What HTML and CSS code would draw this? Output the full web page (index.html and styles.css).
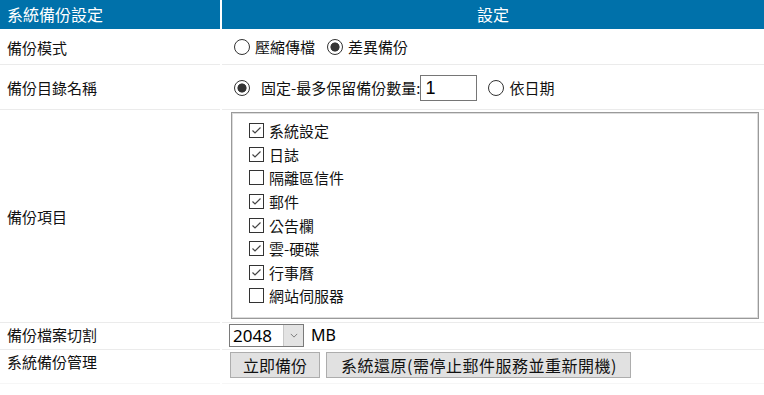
FILE: index.html
```html
<!DOCTYPE html>
<html lang="zh-Hant">
<head>
  <meta charset="UTF-8" />
  <title>系統備份設定</title>
  <link rel="stylesheet" href="styles.css">
</head>
<body>
  <div class="settings">
    <div class="head">系統備份設定</div>
    <div class="head center">設定</div>

    <div class="name row1">備份模式</div>
    <div class="value row1">
      <label class="opt"><span class="radio"></span>壓縮傳檔</label>
      <label class="opt"><span class="radio on"></span>差異備份</label>
    </div>

    <div class="name row2">備份目錄名稱</div>
    <div class="value row2">
      <label class="opt wide"><span class="radio on"></span>固定-最多保留備份數量:</label><span class="num">1</span>
      <label class="opt"><span class="radio"></span>依日期</label>
    </div>

    <div class="name row3">備份項目</div>
    <div class="value row3">
      <div class="listbox">
        <label class="item"><span class="check on"><svg viewBox="0 0 13 13"><path d="M2.5 6.5 L5 9 L10.5 3.5" /></svg></span>系統設定</label>
        <label class="item"><span class="check on"><svg viewBox="0 0 13 13"><path d="M2.5 6.5 L5 9 L10.5 3.5" /></svg></span>日誌</label>
        <label class="item"><span class="check"></span>隔離區信件</label>
        <label class="item"><span class="check on"><svg viewBox="0 0 13 13"><path d="M2.5 6.5 L5 9 L10.5 3.5" /></svg></span>郵件</label>
        <label class="item"><span class="check on"><svg viewBox="0 0 13 13"><path d="M2.5 6.5 L5 9 L10.5 3.5" /></svg></span>公告欄</label>
        <label class="item"><span class="check on"><svg viewBox="0 0 13 13"><path d="M2.5 6.5 L5 9 L10.5 3.5" /></svg></span>雲-硬碟</label>
        <label class="item"><span class="check on"><svg viewBox="0 0 13 13"><path d="M2.5 6.5 L5 9 L10.5 3.5" /></svg></span>行事曆</label>
        <label class="item"><span class="check"></span>網站伺服器</label>
      </div>
    </div>

    <div class="name row4">備份檔案切割</div>
    <div class="value row4">
      <span class="select"><span class="sel-text">2048</span><span class="sel-arrow"><svg viewBox="0 0 10 6"><path d="M1 1 L5 5 L9 1" /></svg></span></span>
      <span class="unit">MB</span>
    </div>

    <div class="name row5">系統備份管理</div>
    <div class="value row5">
      <button class="btn">立即備份</button>
      <button class="btn long">系統還原(需停止郵件服務並重新開機)</button>
    </div>
  </div>
</body>
</html>
```

FILE: styles.css
```css
body {
  margin: 0;
  background: #fff;
  color: #111;
  font-family: "Noto Sans CJK TC", "Noto Sans", sans-serif;
  font-size: 15px;
}
.settings {
  display: grid;
  grid-template-columns: 220px 1fr;
  column-gap: 2px;
  row-gap: 1px;
}
.head {
  background: #0071aa;
  color: #fff;
  font-size: 16px;
  height: 29px;
  line-height: 29px;
  padding-left: 7px;
}
.head.center {
  text-align: center;
  padding-left: 0;
}
.name, .value {
  display: flex;
  align-items: center;
  border-bottom: 1px solid #ebebeb;
  box-sizing: border-box;
}
.name {
  padding-left: 7px;
}
.value {
  padding-left: 9px;
}
.row1 { height: 35px; }
.row2 { height: 44px; }
.row3 { height: 212px; }
.row4 { height: 26px; align-items: flex-start; }
.row5 { height: 33px; align-items: flex-start; border-bottom-color: #f6f6f6; }

.opt {
  display: flex;
  align-items: center;
  margin-right: 9px;
  line-height: 20px;
}
.opt.wide {
  margin-right: 0;
}
.opt.wide .radio {
  margin-right: 11px;
}
.radio {
  width: 14px;
  height: 14px;
  border: 1px solid #333;
  border-radius: 50%;
  margin: 0 5px 0 3px;
  box-sizing: content-box;
}
.radio.on {
  background: radial-gradient(circle, #333 0 4.2px, #fff 4.9px);
}
.num {
  width: 51px;
  height: 24px;
  border: 1px solid #767676;
  font-size: 18px;
  line-height: 24px;
  padding-left: 4px;
  margin-right: 8px;
  color: #000;
  font-family: "Liberation Sans", sans-serif;
}

.value.row3 {
  padding-right: 5px;
  align-items: flex-start;
  padding-top: 1px;
}
.listbox {
  width: 100%;
  height: 207px;
  border: 1px solid #9a9a9a;
  box-shadow: inset 0 0 0 1px #dcdcdc;
  box-sizing: border-box;
  padding: 6px 0 0 17px;
}
.item {
  display: flex;
  align-items: center;
  height: 23.6px;
}
.check {
  width: 13px;
  height: 13px;
  border: 1px solid #333;
  margin-right: 5px;
  background: #fff;
  display: flex;
}
.check svg {
  width: 13px;
  height: 13px;
  fill: none;
  stroke: #444;
  stroke-width: 1.2;
}

.select {
  display: inline-flex;
  height: 23px;
  border: 1px solid #7a7a7a;
  box-sizing: border-box;
  margin-left: -2px;
}
.sel-text {
  width: 50px;
  padding-left: 3px;
  font-family: "Noto Sans", sans-serif;
  font-size: 17px;
  line-height: 21px;
  color: #000;
}
.sel-arrow {
  width: 19px;
  background: #e3e3e3;
  border-left: 1px solid #c8c8c8;
  display: flex;
  align-items: center;
  justify-content: center;
}
.sel-arrow svg {
  width: 8px;
  height: 5px;
  fill: none;
  stroke: #666;
  stroke-width: 1;
}
.unit {
  font-family: "Noto Sans", sans-serif;
  font-size: 16px;
  line-height: 23px;
  margin-left: 7px;
  color: #000;
}

.btn {
  margin-top: 1px;
  height: 26px;
  background: #e1e1e1;
  border: 1px solid #adadad;
  font-family: "Noto Sans CJK TC", "Noto Sans", sans-serif;
  font-size: 16px;
  line-height: 22px;
  padding: 0 12px;
  color: #111;
  margin-right: 6px;
}
.btn:first-child {
  margin-left: -1px;
  padding: 0 12px;
}
.btn.long {
  letter-spacing: 0.5px;
  padding: 0 13px 0 14px;
}
```
